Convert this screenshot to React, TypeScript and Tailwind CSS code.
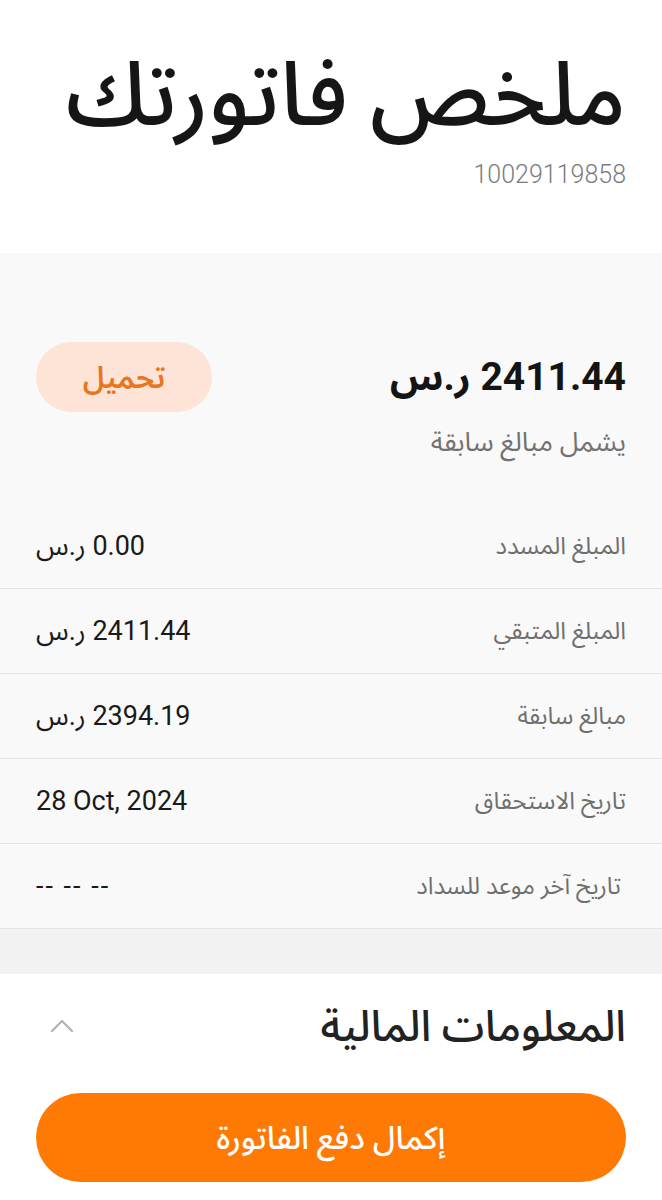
import { ChevronUp } from 'lucide-react';

const rows = [
  { label: 'المبلغ المسدد', value: '0.00 ر.س' },
  { label: 'المبلغ المتبقي', value: '2411.44 ر.س' },
  { label: 'مبالغ سابقة', value: '2394.19 ر.س' },
  { label: 'تاريخ الاستحقاق', value: '28 Oct, 2024', ltr: true },
  { label: 'تاريخ آخر موعد للسداد', value: '-- -- --', inset: true },
];

export default function App() {
  return (
    <div
      dir="rtl"
      className="w-[662px] h-[1200px] bg-white overflow-hidden font-[Roboto,'Noto_Sans_Arabic','DejaVu_Sans',sans-serif]"
    >
      {/* Header */}
      <div className="h-[253px] px-9 pt-[45px]">
        <h1 className="text-[89px] leading-[100px] font-medium text-[#161616]">ملخص فاتورتك</h1>
        <p className="mt-[15px] text-[25px] leading-[30px] font-light text-[#7c7c7c]">10029119858</p>
      </div>

      {/* Summary */}
      <div className="bg-[#f9f9f9]">
        <div className="px-9 pt-[89px]">
          <div className="flex items-center justify-between">
            <p className="text-[39px] leading-[44px] font-bold text-[#141414]">2411.44 ر.س</p>
            <button className="w-[176px] h-[70px] rounded-full bg-[#fde4d7] text-[#e8761f] text-[30px] font-semibold">
              تحميل
            </button>
          </div>
          <p className="mt-[13px] text-[27px] leading-[34px] text-[#727272]">يشمل مبالغ سابقة</p>
        </div>

        <div className="mt-[45px]">
          {rows.map((row) => (
            <div
              key={row.label}
              className="h-[85px] px-9 flex items-center justify-between border-b border-[#e4e4e4]"
            >
              <span className={`text-[24px] text-[#6f6f6f] ${row.inset ? 'pr-[5px]' : ''}`}>{row.label}</span>
              <span
                dir={row.ltr || row.inset ? 'ltr' : undefined}
                className={`text-[27px] text-[#1a1a1a] ${row.inset ? 'tracking-[2px]' : ''}`}
              >
                {row.value}
              </span>
            </div>
          ))}
        </div>
        <div className="h-[45px] bg-[#f2f2f2]" />
      </div>

      {/* Financial info */}
      <div className="px-9">
        <div className="h-[104px] flex items-center justify-between">
          <h2 className="text-[43px] font-medium text-[#222]">المعلومات المالية</h2>
          <ChevronUp className="w-[40px] h-[40px] text-[#b4b4b4] ml-[6px]" strokeWidth={1.4} />
        </div>
        <button className="mt-[15px] w-full h-[89px] rounded-full bg-[#fe7a05] text-white text-[32px] font-medium">
          إكمال دفع الفاتورة
        </button>
      </div>
    </div>
  );
}
